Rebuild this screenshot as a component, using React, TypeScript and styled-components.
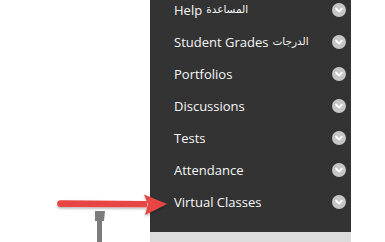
import React from "react";
import styled, { createGlobalStyle } from "styled-components";

const Global = createGlobalStyle`
  html, body { margin: 0; padding: 0; background: #fff; }
  body { width: 385px; height: 242px; overflow: hidden; font-family: "Open Sans", "DejaVu Sans", sans-serif; }
`;

const Page = styled.div`
  position: relative;
  display: flex;
  width: 385px;
  height: 242px;
  overflow: hidden;
  background: #fff;
`;

const Spacer = styled.div`
  width: 150px;
  flex: none;
`;

const Column = styled.div`
  width: 201px;
  display: flex;
  flex-direction: column;
`;

const Panel = styled.nav`
  background: #333333;
  height: 232px;
  overflow: hidden;
`;

const List = styled.ul`
  list-style: none;
  margin: -6px 0 0 0;
  padding: 0;
`;

const Row = styled.li`
  height: 32px;
  display: flex;
  align-items: center;
  justify-content: space-between;
  padding: 0 5px 0 24px;
`;

const Label = styled.span`
  color: #f6f6f6;
  font-size: 13px;
  font-weight: 500;
  font-family: "Open Sans", sans-serif;
  display: flex;
  align-items: center;
  gap: 4px;
  white-space: nowrap;
`;

const Arabic = styled.span`
  font-family: "DejaVu Sans", "Noto Sans", sans-serif;
  font-size: 10.5px;
  position: relative;
  top: -1px;
`;

const Footer = styled.div`
  height: 10px;
  background: #dcdcdc;
`;

const Arrow = styled.svg`
  position: absolute;
  left: 52px;
  top: 190px;
`;

const Post = styled.svg`
  position: absolute;
  left: 94px;
  top: 210px;
`;

const Chevron = () => (
  <svg width="14" height="14" viewBox="0 0 14 14">
    <circle cx="7" cy="7" r="7" fill="#c6c6c6" />
    <path d="M4.2 5.8 L7 8.4 L9.8 5.8" fill="none" stroke="#fff" strokeWidth="2" strokeLinecap="round" strokeLinejoin="round" />
  </svg>
);

type Item = { en: string; ar?: string };

const items: Item[] = [
  { en: "Help", ar: "المساعدة" },
  { en: "Student Grades", ar: "الدرجات" },
  { en: "Portfolios" },
  { en: "Discussions" },
  { en: "Tests" },
  { en: "Attendance" },
  { en: "Virtual Classes" },
];

export default function App() {
  return (
    <>
      <Global />
      <Page>
        <Spacer />
        <Column>
          <Panel>
            <List>
              {items.map((it) => (
                <Row key={it.en}>
                  <Label>
                    {it.en}
                    {it.ar && <Arabic dir="rtl">{it.ar}</Arabic>}
                  </Label>
                  <Chevron />
                </Row>
              ))}
            </List>
          </Panel>
          <Footer />
        </Column>
        <Post width="14" height="32" viewBox="0 0 14 32">
          <path d="M1 1 L11 1 L10 11 L8 11 L8 32 L3 32 L3 11 L1 11 Z" fill="#7c7c7c" />
        </Post>
        <Arrow width="120" height="32" viewBox="0 0 120 32">
          <defs>
            <filter id="sh" x="-10%" y="-30%" width="120%" height="170%">
              <feDropShadow dx="0" dy="1.5" stdDeviation="1" floodColor="#000" floodOpacity="0.3" />
            </filter>
          </defs>
          <g filter="url(#sh)">
            <path d="M8 10.3 L95 11 L95 17.2 L8 17 A3.4 3.4 0 0 1 8 10.3 Z" fill="#e84545" />
            <path d="M92 4.5 L115 14 L93 25 L96 14 Z" fill="#e84545" />
          </g>
        </Arrow>
      </Page>
    </>
  );
}
